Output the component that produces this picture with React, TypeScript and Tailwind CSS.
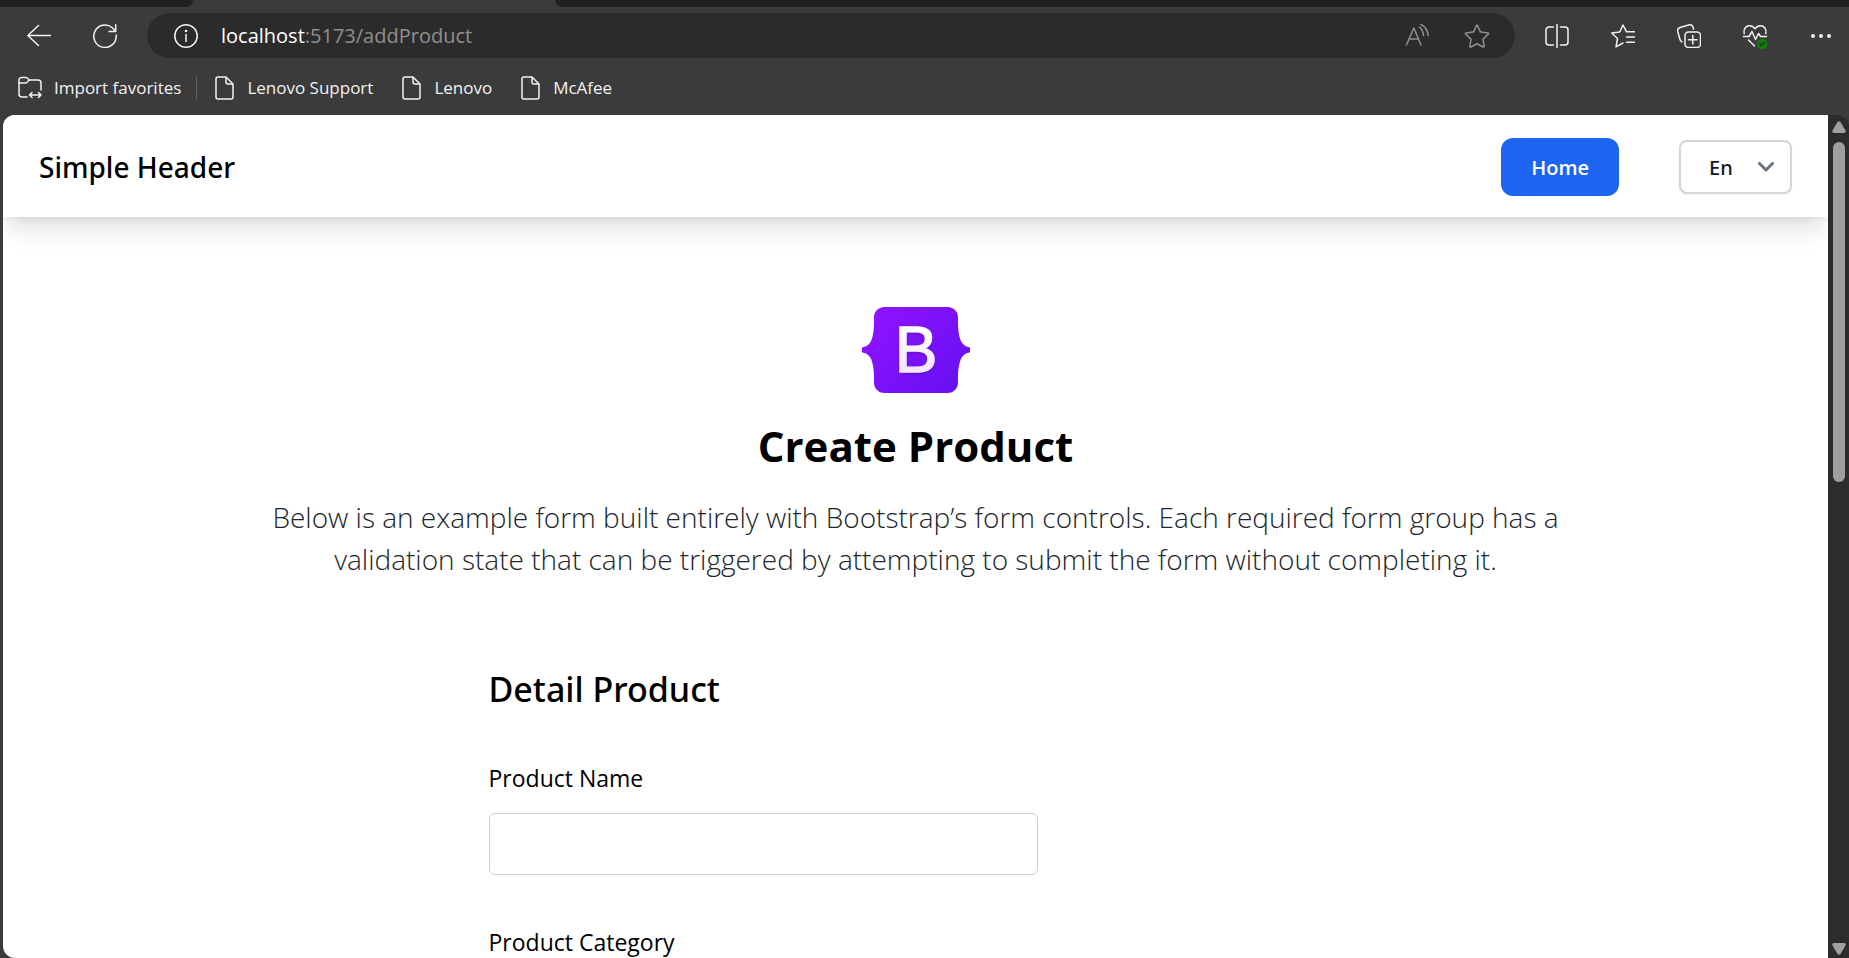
import type { ReactNode } from 'react';

type IconProps = { children: ReactNode; className?: string };

function Icon({ children, className = 'size-6' }: IconProps) {
  return (
    <svg
      viewBox="0 0 24 24"
      className={className}
      fill="none"
      stroke="currentColor"
      strokeWidth="1.5"
      strokeLinecap="round"
      strokeLinejoin="round"
      aria-hidden="true"
    >
      {children}
    </svg>
  );
}

function FolderIcon() {
  return (
    <Icon>
      <path d="M9 21H4a3 3 0 0 1-3-3V4a2.500 2.500 0 0 1 2.500-2.500H8.500L11.500 4H20a3 3 0 0 1 3 3V14" />
      <path d="M1 7H7.500C9.500 7 10 4.500 11.500 4" />
      <path d="M11.500 19H23M14 16.500L11.500 19L14 21.500M20.500 16.500L23 19L20.500 21.500" />
    </Icon>
  );
}

function FileIcon() {
  return (
    <svg viewBox="0 0 20 24" className="h-6 w-5" fill="none" stroke="currentColor" strokeWidth="1.5" strokeLinejoin="round" aria-hidden="true">
      <path d="M4 1H12L19 8V21a2 2 0 0 1-2 2H4a2 2 0 0 1-2-2V3a2 2 0 0 1 2-2Z" />
      <path d="M12 1V6a2 2 0 0 0 2 2H19" />
    </svg>
  );
}

function BootstrapLogo() {
  return (
    <svg viewBox="0 0 108 86" className="h-[86px] w-[108px]" role="img" aria-label="Bootstrap">
      <defs>
        <linearGradient id="brand" x1="12" y1="2" x2="98" y2="84" gradientUnits="userSpaceOnUse">
          <stop offset="0" stopColor="#9013fe" />
          <stop offset="1" stopColor="#6610f2" />
        </linearGradient>
        <linearGradient id="letter" x1="0" y1="20" x2="0" y2="67" gradientUnits="userSpaceOnUse">
          <stop offset="0" stopColor="#fff" />
          <stop offset="1" stopColor="#f1e5fc" />
        </linearGradient>
        <filter id="soft" x="-20%" y="-20%" width="140%" height="140%">
          <feDropShadow dx="0" dy="1" stdDeviation="1.500" floodOpacity="0.2" />
        </filter>
      </defs>
      <path
        fill="url(#brand)"
        d="M22.500 0C16 0 11.700 5 12 11C12.200 18 11.800 27 9.500 33C8 36.500 5 40 0 40.400V45.600C5 46 8 49.500 9.500 53C11.800 59 12.200 68 12 75C11.700 81 16 86 22.500 86H85.500C92 86 96.300 81 96 75C95.800 68 96.200 59 98.500 53C100 49.500 103 46 108 45.600V40.400C103 40 100 36.500 98.500 33C96.200 27 95.800 18 96 11C96.300 5 92 0 85.500 0Z"
      />
      <text x="54" y="65" textAnchor="middle" fontFamily="Liberation Sans, sans-serif" fontSize="64" fill="url(#letter)" stroke="url(#letter)" strokeWidth="1.5" filter="url(#soft)">
        B
      </text>
    </svg>
  );
}

const bookmarks = ['Lenovo Support', 'Lenovo', 'McAfee'];

function BrowserChrome() {
  return (
    <div className="shrink-0 bg-[#3b3b3b] text-[#f2f2f2]">
      <div className="flex h-[7px] justify-between">
        <div className="w-[193px] rounded-br-lg bg-[#202020]" />
        <div className="ml-[362px] flex-1 rounded-bl-lg bg-[#202020]" />
      </div>
      <div className="flex items-center pt-1.5 pr-4">
        <div className="flex w-[147px] items-center gap-[42px] pl-[27px]">
          <button type="button" aria-label="Back" className="size-6">
            <Icon>
              <path d="M23.500 11.500H.800M11.500 1.500L.800 11.500L11.500 21.500" />
            </Icon>
          </button>
          <button type="button" aria-label="Refresh" className="size-6">
            <Icon>
              <path d="M23.200 11V12.500A11.200 11.200 0 1 1 19 3.500L22.500 7M22.700 .800V7.500H16" />
            </Icon>
          </button>
        </div>
        <div className="flex h-[45px] flex-1 items-center rounded-full bg-[#2b2b2b] pr-[26px] pl-[27px]">
          <Icon>
            <circle cx="12" cy="12" r="11.200" />
            <path d="M12 10.500V17.500" />
            <circle cx="12" cy="7" r=".600" fill="currentColor" />
          </Icon>
          <a href="#address" className="ml-[23px] flex-1 text-xl text-[#8f8f8f]">
            <span className="text-white">localhost</span>:5173/addProduct
          </a>
          <div className="flex items-center gap-9 text-[#8f8f8f]">
            <button type="button" aria-label="Read aloud" className="size-6">
              <Icon>
                <path d="M1.500 21L8.800 4L16 21M4 15H13.500M14.500 3.200C16.800 5 18.300 8 18.500 11.500M16 .500C20 2.500 22.800 6.500 23.200 11.500" />
              </Icon>
            </button>
            <button type="button" aria-label="Add to favorites" className="size-6">
              <Icon className="size-6 overflow-visible">
                <path d="M12.400 1.400L15.200 7.400Q15.400 7.900 16 8L22.800 9Q24 9.300 23.200 10.200L18.300 14.900Q17.900 15.300 18 15.900L19.200 22.200Q19.200 23.400 18.100 23L12.500 20Q12 19.800 11.500 20L5.900 23Q4.800 23.400 4.800 22.200L6 15.900Q6.100 15.300 5.700 14.900L.800 10.200Q0 9.300 1.200 9L8 8Q8.600 7.900 8.800 7.400L11.600 1.400Q12 .800 12.400 1.400Z" />
              </Icon>
            </button>
          </div>
        </div>
        <div className="ml-[30px] flex items-center gap-[42px]">
          <button type="button" aria-label="Split screen" className="size-6">
            <Icon>
              <path d="M12 .500V23.500M8.500 3H4a3 3 0 0 0-3 3V18a3 3 0 0 0 3 3H8.500M15.500 3H20a3 3 0 0 1 3 3V18a3 3 0 0 1-3 3H15.500" />
            </Icon>
          </button>
          <button type="button" aria-label="Favorites" className="size-6">
            <Icon>
              <path d="M23.500 7.800H15.500L12 1L8.700 8L.700 9L6.500 14.500L5 22.800L12 19M15.500 13H23.500M15.500 18.200H23.500" />
            </Icon>
          </button>
          <button type="button" aria-label="Collections" className="size-6">
            <Icon>
              <rect x="8" y="8" width="15.500" height="15.500" rx="3.500" />
              <path d="M15.800 11.500V20M11.500 15.800H20M5 18C3.500 17.500 3 16 2.700 14.500L.700 7.500C.300 5.500 1 4.200 3 3.500L12.500 .800C14.500 .500 15.600 1.500 16 3L16.500 5" />
            </Icon>
          </button>
          <button type="button" aria-label="Browser essentials" className="size-6">
            <Icon className="size-6 overflow-visible">
              <path d="M1.200 9.500C0 5 3 1.800 6.500 1.800C9 1.800 10.800 3 12 4.800C13.200 3 15 1.800 17.500 1.800C21 1.800 24 5 22.800 9.500M.500 12.500H6L9 7.500L12.500 15.500L15.500 9.500L17.500 12.500H23.500M5.500 16L11.500 22" />
              <circle cx="19" cy="20" r="5.300" fill="#107c10" stroke="none" />
              <path d="M16.700 20.200L18.300 21.800L21.300 18.500" stroke="#223322" />
            </Icon>
          </button>
          <button type="button" aria-label="Settings and more" className="size-6">
            <Icon>
              <g fill="currentColor" stroke="none">
                <circle cx="4" cy="12" r="2" />
                <circle cx="12" cy="12" r="2" />
                <circle cx="20" cy="12" r="2" />
              </g>
            </Icon>
          </button>
        </div>
      </div>
      <nav aria-label="Bookmarks" className="flex h-[57px] items-center pt-0.5 pl-[18px] text-[17px]">
        <a href="#import" className="flex items-center gap-3">
          <FolderIcon />
          Import favorites
        </a>
        <div className="ml-[15px] h-6 w-px bg-[#606060]" />
        <div className="ml-[17px] flex items-center gap-7">
          {bookmarks.map((name) => (
            <a key={name} href="#bookmark" className="flex items-center gap-[13px]">
              <FileIcon />
              {name}
            </a>
          ))}
        </div>
      </nav>
    </div>
  );
}

function Header() {
  return (
    <header className="flex h-[102px] items-center justify-between bg-white px-9 pt-px shadow-[0_14px_24px_-4px_rgba(0,0,0,0.14),0_5px_8px_-5px_rgba(0,0,0,0.08)]">
      <h1 className="font-['Noto_Sans','Open_Sans',sans-serif] text-[28px] font-medium text-black">Simple Header</h1>
      <div className="flex items-center gap-[60px]">
        <a href="#home" className="flex h-[58px] items-center rounded-xl bg-[#1c64f2] px-[30px] pt-0.5 text-xl font-semibold text-white">
          Home
        </a>
        <div className="relative">
          <select
            aria-label="Language"
            className="h-[54px] w-[113px] appearance-none rounded-lg border-2 border-gray-300 bg-white pt-0.5 pl-7 font-['Noto_Sans','Open_Sans',sans-serif] text-xl font-medium text-gray-900 shadow-xs"
          >
            <option>En</option>
          </select>
          <svg viewBox="0 0 16 10" className="pointer-events-none absolute top-[22px] right-[18px] h-2.5 w-4" fill="none" stroke="#6b7280" strokeWidth="3" strokeLinecap="round" strokeLinejoin="round" aria-hidden="true">
            <path d="M1.500 1.500L8 8L14.500 1.500" />
          </svg>
        </div>
      </div>
    </header>
  );
}

function Field({ id, label }: { id: string; label: string }) {
  return (
    <div className="flex flex-col gap-[17px]">
      <label htmlFor={id} className="text-[23px] leading-9 text-black">
        {label}
      </label>
      <input id={id} type="text" className="h-[62px] w-[549px] max-w-full rounded-md border border-[#cbcfd6] bg-white px-4 text-xl" />
    </div>
  );
}

export default function App() {
  return (
    <div className="flex h-screen flex-col overflow-hidden bg-[#3b3b3b] font-['Open_Sans','Noto_Sans',sans-serif]">
      <BrowserChrome />
      <div className="flex min-h-0 flex-1 pl-[3px]">
        <div className="min-w-0 flex-1 overflow-hidden rounded-l-xl bg-white">
          <Header />
          <main className="flex flex-col items-center pt-[90px]">
            <BootstrapLogo />
            <h2 className="mt-[23px] text-[42px] leading-[60px] font-bold text-black">Create Product</h2>
            <p className="mt-5 max-w-[1320px] text-center text-[28px] leading-[42px] font-light text-[#212529]">
              Below is an example form built entirely with Bootstrap’s form controls. Each required form group has a validation state that can be triggered
              by attempting to submit the form without completing it.
            </p>
            <form className="mt-[84px] w-full max-w-[854px]">
              <h3 className="font-['Noto_Sans','Open_Sans',sans-serif] text-[34px] leading-[50px] font-medium text-black">Detail Product</h3>
              <div className="mt-[46px] flex flex-col gap-[49px]">
                <Field id="product-name" label="Product Name" />
                <Field id="product-category" label="Product Category" />
              </div>
            </form>
          </main>
        </div>
        <div aria-hidden="true" className="flex w-[21px] shrink-0 flex-col items-center rounded-tr-xl bg-[#2c2c2c] pt-1.5 pb-[3px]">
          <svg viewBox="0 0 14 12" className="h-3 w-3.5" fill="#9f9f9f">
            <path d="M5.500 1Q7-.500 8.500 1L13.500 9.500Q14.300 12 12 12H2Q-.300 12 .500 9.500Z" />
          </svg>
          <div className="mt-[9px] h-[340px] w-3 rounded-full bg-[#9f9f9f]" />
          <svg viewBox="0 0 14 12" className="mt-auto h-3 w-3.5" fill="#9f9f9f">
            <path d="M5.500 11Q7 12.500 8.500 11L13.500 2.500Q14.300 0 12 0H2Q-.300 0 .500 2.500Z" />
          </svg>
        </div>
      </div>
    </div>
  );
}
